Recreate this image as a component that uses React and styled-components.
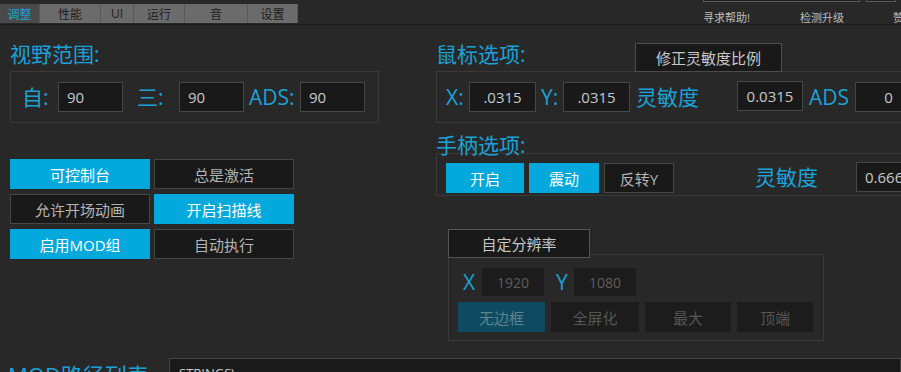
import React from 'react';
import styled, { createGlobalStyle } from 'styled-components';

const BLUE = '#1aa2d8';
const FILL = '#03a8dc';

const GlobalStyle = createGlobalStyle`
  html, body { margin: 0; padding: 0; background: #282828; }
  body { font-family: "Open Sans", "Noto Sans CJK SC", sans-serif; }
  * { box-sizing: border-box; }
`;

const Frame = styled.div`
  width: 901px;
  height: 372px;
  overflow: hidden;
  background: #282828;
  display: flex;
  flex-direction: column;
  font-family: "Open Sans", "Noto Sans CJK SC", sans-serif;
`;

const TopBar = styled.div`
  height: 25px;
  flex-shrink: 0;
  border-bottom: 1px solid #1b1b1b;
  display: flex;
`;

const Tabs = styled.div`
  display: flex;
  margin-top: 4px;
  height: 19px;
`;

const Tab = styled.div`
  width: ${p => p.$w}px;
  height: 19px;
  display: flex;
  align-items: center;
  justify-content: center;
  font-size: 12px;
  background: ${p => (p.$active ? '#4a4a4a' : '#6b6b6b')};
  color: ${p => (p.$active ? BLUE : '#1c1c1c')};
  border-right: 1px solid #585858;
`;

const Links = styled.div`
  margin-left: auto;
  width: 198px;
  display: flex;
  flex-direction: column;
`;

const LinkBoxes = styled.div`
  display: flex;
  gap: 6px;
  height: 2px;
`;

const LinkBox = styled.div`
  width: ${p => p.$w}px;
  height: 2px;
  border: 1px solid #5a5a5a;
  border-top: none;
  background: #1e1e1e;
`;

const LinkRow = styled.div`
  display: flex;
  margin-top: 9px;
  font-size: 11px;
  line-height: 14px;
  color: #bdbdbd;
  white-space: nowrap;
`;

const LinkText = styled.span`
  width: ${p => p.$w}px;
  flex-shrink: 0;
`;

const Main = styled.div`
  display: flex;
  height: 333px;
  flex-shrink: 0;
`;

const LeftCol = styled.div`
  width: 436px;
  flex-shrink: 0;
  padding-left: 10px;
`;

const RightCol = styled.div`
  flex: 1;
  min-width: 0;
`;

const Title = styled.div`
  font-size: 21px;
  line-height: 26px;
  height: 26px;
  color: ${BLUE};
  white-space: nowrap;
  margin-top: ${p => p.$mt || 0}px;
  margin-bottom: ${p => p.$mb || 0}px;
  width: ${p => (p.$w ? `${p.$w}px` : 'auto')};
  flex-shrink: 0;
`;

const Panel = styled.div`
  border: 1px solid #3a3a3a;
  width: ${p => p.$w}px;
  height: ${p => p.$h}px;
  display: flex;
  align-items: ${p => p.$align || 'center'};
  padding-left: ${p => p.$pl || 0}px;
  padding-top: ${p => p.$pt || 0}px;
  margin-top: ${p => p.$mt || 0}px;
`;

const Label = styled.span`
  font-size: 21px;
  color: ${BLUE};
  width: ${p => p.$w}px;
  margin-left: ${p => p.$ml || 0}px;
  flex-shrink: 0;
  white-space: nowrap;
  line-height: 28px;
`;

const Input = styled.div`
  width: ${p => p.$w}px;
  height: 30px;
  flex-shrink: 0;
  background: #191919;
  border: 1px solid #464646;
  color: #c8c8c8;
  font-size: 15px;
  display: flex;
  align-items: center;
  justify-content: ${p => (p.$center ? 'center' : 'flex-start')};
  padding-left: ${p => (p.$center ? 0 : 8)}px;
  margin-top: ${p => p.$mt || 0}px;
`;

const Toggles = styled.div`
  margin-top: 36px;
  display: grid;
  grid-template-columns: 140px 140px;
  grid-auto-rows: 30px;
  column-gap: 4px;
  row-gap: 5px;
`;

const Toggle = styled.div`
  display: flex;
  align-items: center;
  justify-content: center;
  font-size: 15px;
  background: ${p => (p.$on ? FILL : '#191919')};
  color: ${p => (p.$on ? '#ffffff' : '#b4b4b4')};
  border: 1px solid ${p => (p.$on ? FILL : '#464646')};
`;

const HeaderRow = styled.div`
  display: flex;
  height: 30px;
  margin-top: 16px;
`;

const HeaderButton = styled.div`
  width: 147px;
  height: 29px;
  margin-top: 2px;
  background: #191919;
  border: 1px solid #4c4c4c;
  color: #c8c8c8;
  font-size: 15px;
  display: flex;
  align-items: center;
  justify-content: center;
  position: relative;
  z-index: 1;
`;

const PadButton = styled.div`
  width: ${p => p.$w}px;
  height: 30px;
  margin-left: ${p => p.$ml || 0}px;
  flex-shrink: 0;
  display: flex;
  align-items: center;
  justify-content: center;
  font-size: 15px;
  background: ${p => (p.$on ? FILL : '#191919')};
  color: ${p => (p.$on ? '#ffffff' : '#b4b4b4')};
  border: 1px solid ${p => (p.$on ? FILL : '#464646')};
`;

const ResSection = styled.div`
  margin-top: 33px;
  margin-left: 12px;
`;

const ResButton = styled.div`
  width: 142px;
  height: 29px;
  margin-bottom: -4px;
  position: relative;
  z-index: 1;
  background: #191919;
  border: 1px solid #555555;
  color: #c8c8c8;
  font-size: 15px;
  display: flex;
  align-items: center;
  justify-content: center;
`;

const ResPanel = styled.div`
  width: 376px;
  height: 87px;
  border: 1px solid #3a3a3a;
  padding: 13px 0 0 14px;
`;

const ResRow = styled.div`
  display: flex;
  align-items: center;
  height: 28px;
`;

const DimInput = styled.div`
  width: 62px;
  height: 28px;
  background: #1c1c1c;
  color: #5e5e5e;
  font-size: 14px;
  display: flex;
  align-items: center;
  justify-content: center;
`;

const ModeRow = styled.div`
  display: flex;
  gap: 6px;
  margin-top: 6px;
  margin-left: -5px;
`;

const ModeButton = styled.div`
  width: ${p => p.$w}px;
  height: 30px;
  display: flex;
  align-items: center;
  justify-content: center;
  font-size: 15px;
  background: ${p => (p.$on ? '#0f4b60' : '#1c1c1c')};
  color: ${p => (p.$on ? '#5f8494' : '#555555')};
`;

const BottomRow = styled.div`
  display: flex;
  height: 40px;
  flex-shrink: 0;
`;

const BottomLabel = styled.div`
  width: 169px;
  padding-left: 8px;
  padding-top: 2px;
  font-size: 22px;
  line-height: 30px;
  color: ${BLUE};
  white-space: nowrap;
  flex-shrink: 0;
`;

const PathBox = styled.div`
  flex: 1;
  border: 1px solid #444444;
  background: #1a1a1a;
  padding-left: 9px;
  padding-top: 5px;
  font-size: 13px;
  color: #c8c8c8;
`;

const tabs = [
  { t: '调整', w: 40, a: true },
  { t: '性能', w: 61 },
  { t: 'UI', w: 33 },
  { t: '运行', w: 51 },
  { t: '音', w: 63 },
  { t: '设置', w: 50 },
];

const toggles = [
  { t: '可控制台', on: true },
  { t: '总是激活' },
  { t: '允许开场动画' },
  { t: '开启扫描线', on: true },
  { t: '启用MOD组', on: true },
  { t: '自动执行' },
];

const modes = [
  { t: '无边框', w: 87, on: true },
  { t: '全屏化', w: 88 },
  { t: '最大', w: 86 },
  { t: '顶端', w: 76 },
];

export default function App() {
  return (
    <Frame>
      <GlobalStyle />
      <TopBar>
        <Tabs>
          {tabs.map(tab => (
            <Tab key={tab.t} $w={tab.w} $active={tab.a}>{tab.t}</Tab>
          ))}
        </Tabs>
        <Links>
          <LinkBoxes>
            <LinkBox $w={157} />
            <LinkBox $w={30} />
          </LinkBoxes>
          <LinkRow>
            <LinkText $w={97}>寻求帮助!</LinkText>
            <LinkText $w={93}>检测升级</LinkText>
            <LinkText $w={30}>赞助</LinkText>
          </LinkRow>
        </Links>
      </TopBar>
      <Main>
        <LeftCol>
          <Title $mt={16}>视野范围:</Title>
          <Panel $w={369} $h={52} $pl={11} $mt={4}>
            <Label $w={36}>自:</Label>
            <Input $w={65}>90</Input>
            <Label $w={42} $ml={14}>三:</Label>
            <Input $w={65}>90</Input>
            <Label $w={51} $ml={5}>ADS:</Label>
            <Input $w={65}>90</Input>
          </Panel>
          <Toggles>
            {toggles.map(tg => (
              <Toggle key={tg.t} $on={tg.on}>{tg.t}</Toggle>
            ))}
          </Toggles>
        </LeftCol>
        <RightCol>
          <HeaderRow>
            <Title $w={199}>鼠标选项:</Title>
            <HeaderButton>修正灵敏度比例</HeaderButton>
          </HeaderRow>
          <Panel $w={500} $h={52} $pl={9}>
            <Label $w={23}>X:</Label>
            <Input $w={67} $center>.0315</Input>
            <Label $w={22} $ml={5}>Y:</Label>
            <Input $w={67} $center>.0315</Input>
            <Label $w={101} $ml={6}>灵敏度</Label>
            <Input $w={66} $center $mt={-2}>0.0315</Input>
            <Label $w={46} $ml={6}>ADS</Label>
            <Input $w={67} $center>0</Input>
          </Panel>
          <Title $mt={9} $mb={-5}>手柄选项:</Title>
          <Panel $w={500} $h={43} $pl={9} $pt={9} $align="flex-start">
            <PadButton $w={78} $on>开启</PadButton>
            <PadButton $w={70} $ml={5} $on>震动</PadButton>
            <PadButton $w={70} $ml={5}>反转Y</PadButton>
            <Label $w={101} $ml={81}>灵敏度</Label>
            <Input $w={67} $mt={-1}>0.666</Input>
          </Panel>
          <ResSection>
            <ResButton>自定分辨率</ResButton>
            <ResPanel>
              <ResRow>
                <Label $w={19}>X</Label>
                <DimInput>1920</DimInput>
                <Label $w={18} $ml={12}>Y</Label>
                <DimInput>1080</DimInput>
              </ResRow>
              <ModeRow>
                {modes.map(m => (
                  <ModeButton key={m.t} $w={m.w} $on={m.on}>{m.t}</ModeButton>
                ))}
              </ModeRow>
            </ResPanel>
          </ResSection>
        </RightCol>
      </Main>
      <BottomRow>
        <BottomLabel>MOD路径列表</BottomLabel>
        <PathBox>STRINGS\</PathBox>
      </BottomRow>
    </Frame>
  );
}
